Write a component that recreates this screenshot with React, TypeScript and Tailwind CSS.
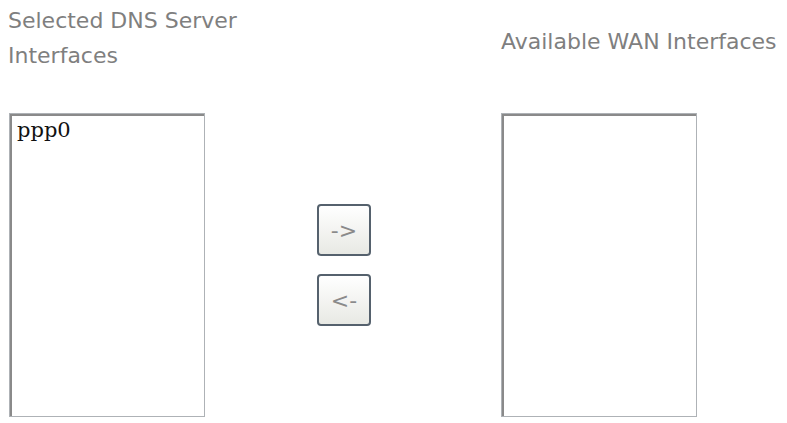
import React from "react";

const ListBox: React.FC<{ items: string[] }> = ({ items }) => {
  return (
    <div className="h-[304px] w-[196px] border border-[#aeb2b6] bg-white">
      <div className="h-full w-full border-t-2 border-l-2 border-[#8a8a8a] px-[5px] pt-[1px]">
        {items.map((item) => (
          <div
            key={item}
            className="text-[21px] font-medium leading-[26px] text-[#111111]"
            style={{ fontFamily: '"DejaVu Serif", "Liberation Serif", serif' }}
          >
            {item}
          </div>
        ))}
      </div>
    </div>
  );
};

const MoveButton: React.FC<{ label: string }> = ({ label }) => {
  return (
    <button className="flex h-[52px] w-[54px] items-center justify-center rounded-[4px] border-2 border-[#55616d] bg-gradient-to-b from-white to-[#e8e9e4] text-[22px] text-[#8a8a8a]">
      {label}
    </button>
  );
};

export default function App() {
  return (
    <div
      className="h-[423px] w-[787px] overflow-hidden bg-white pl-2 text-[22px] text-[#7f7f7f]"
      style={{ fontFamily: '"DejaVu Sans", Verdana, sans-serif' }}
    >
      <div className="flex h-[73px]">
        <div className="w-[250px] pt-[3px] leading-[35px]">
          Selected DNS Server Interfaces
        </div>
        <div className="ml-[243px] pt-[24px] leading-[35px] whitespace-nowrap">
          Available WAN Interfaces
        </div>
      </div>

      <div className="mt-[40px] flex items-center pl-[1px]">
        <ListBox items={["ppp0"]} />
        <div className="ml-[112px] flex flex-col gap-[18px]">
          <MoveButton label="->" />
          <MoveButton label="<-" />
        </div>
        <div className="ml-[130px]">
          <ListBox items={[]} />
        </div>
      </div>
    </div>
  );
}
